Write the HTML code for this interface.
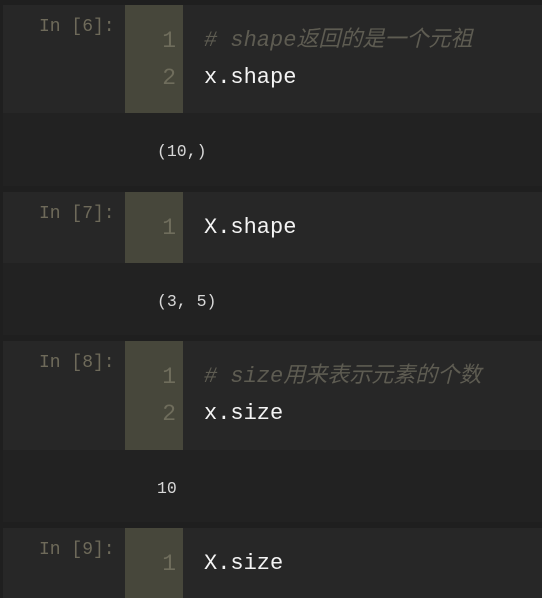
<!DOCTYPE html>
<html><head><meta charset="utf-8"><style>
body{margin:0;width:542px;height:598px;background:#1f1f1f;overflow:hidden;font-family:"Liberation Mono","Noto Sans CJK SC",monospace;position:relative}
.in{position:absolute;left:3px;width:539px;background:#272727}
.gut{position:absolute;left:122px;width:58px;top:0;bottom:0;background:#47473b}
.p{position:absolute;left:36px;top:10px;line-height:24px;color:#6e6a5a;font-size:18px}
.ln{position:absolute;left:122px;width:51px;text-align:right;color:#6f6d5c;font-size:23px;line-height:30px}
.c{position:absolute;left:201px;color:#f4f4f4;font-size:22px;line-height:30px;white-space:pre}
.cm{color:#5e5c52;font-style:italic}
.out{position:absolute;left:3px;width:539px;background:#222}
.o{position:absolute;left:154px;color:#d8d8d8;font-size:16.5px;line-height:24px;top:27px}
</style></head><body>
<div class="in" style="top:5px;height:108px"><div class="gut"></div><div class="p">In [6]:</div>
<div class="ln" style="top:21px">1</div><div class="c cm" style="top:21px"># shape返回的是一个元祖</div>
<div class="ln" style="top:58px">2</div><div class="c" style="top:58px">x.shape</div></div>
<div class="out" style="top:113px;height:73px"><div class="o">(10,)</div></div>

<div class="in" style="top:192px;height:71px"><div class="gut"></div><div class="p">In [7]:</div>
<div class="ln" style="top:21px">1</div><div class="c" style="top:21px">X.shape</div></div>
<div class="out" style="top:263px;height:72px"><div class="o">(3, 5)</div></div>

<div class="in" style="top:341px;height:109px"><div class="gut"></div><div class="p">In [8]:</div>
<div class="ln" style="top:21px">1</div><div class="c cm" style="top:21px"># size用来表示元素的个数</div>
<div class="ln" style="top:58px">2</div><div class="c" style="top:58px">x.size</div></div>
<div class="out" style="top:450px;height:72px"><div class="o">10</div></div>

<div class="in" style="top:528px;height:70px"><div class="gut"></div><div class="p">In [9]:</div>
<div class="ln" style="top:21px">1</div><div class="c" style="top:21px">X.size</div></div>
</body></html>
